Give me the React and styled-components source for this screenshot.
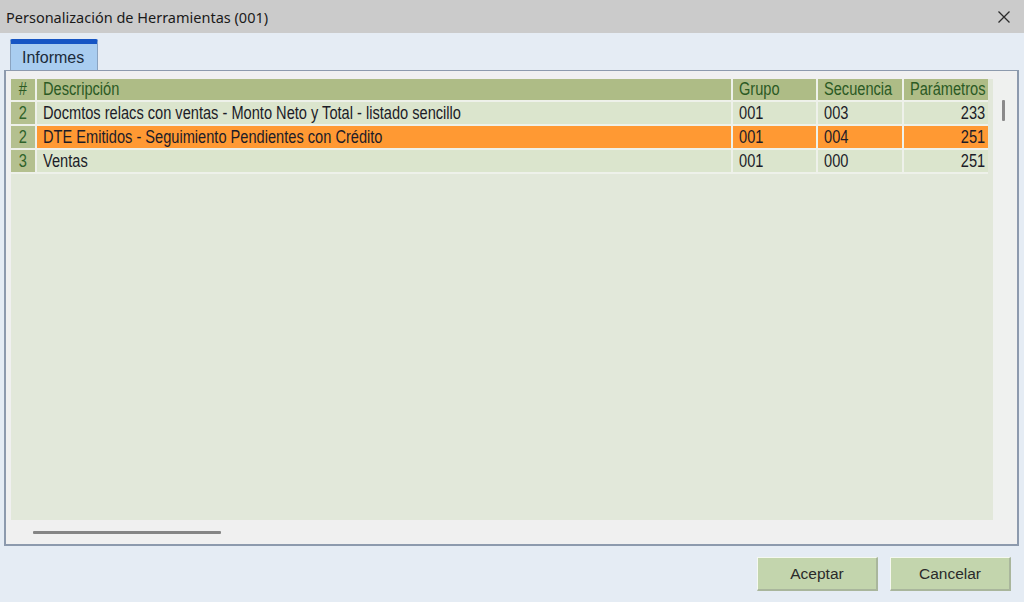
import styled, { createGlobalStyle } from "styled-components";

const GlobalStyle = createGlobalStyle`
  html, body {
    margin: 0;
    padding: 0;
    background: #e5ecf4;
  }
  * {
    box-sizing: border-box;
  }
`;

const rows = [
  { n: "2", desc: "Docmtos relacs con ventas - Monto Neto y Total - listado sencillo", grupo: "001", sec: "003", par: "233" },
  { n: "2", desc: "DTE Emitidos - Seguimiento Pendientes con Crédito", grupo: "001", sec: "004", par: "251", selected: true },
  { n: "3", desc: "Ventas", grupo: "001", sec: "000", par: "251" },
];

function App() {
  return (
    <Window>
      <GlobalStyle />
      <TitleBar>
        <Title>Personalización de Herramientas (001)</Title>
        <CloseBtn aria-label="Cerrar">
          <svg width="14" height="14" viewBox="0 0 14 14">
            <path d="M1.5 1.5 L12.5 12.5 M12.5 1.5 L1.5 12.5" stroke="#2b2b2b" strokeWidth="1.3" fill="none" />
          </svg>
        </CloseBtn>
      </TitleBar>

      <Body>
        <TabStrip>
          <Tab>Informes</Tab>
        </TabStrip>

        <Panel>
          <GridRow>
            <GridArea>
              <Table>
                <HeadCell $align="center"><Narrow $align="center">#</Narrow></HeadCell>
                <HeadCell><Narrow>Descripción</Narrow></HeadCell>
                <HeadCell><Narrow>Grupo</Narrow></HeadCell>
                <HeadCell><Narrow>Secuencia</Narrow></HeadCell>
                <HeadCell $align="right"><Narrow $align="right">Parámetros</Narrow></HeadCell>
                {rows.map((r, i) => (
                  <Row key={i}>
                    <NumCell><Narrow $align="center">{r.n}</Narrow></NumCell>
                    <Cell $sel={r.selected}><Narrow>{r.desc}</Narrow></Cell>
                    <Cell $sel={r.selected}><Narrow>{r.grupo}</Narrow></Cell>
                    <Cell $sel={r.selected}><Narrow>{r.sec}</Narrow></Cell>
                    <Cell $sel={r.selected} $align="right"><Narrow $align="right">{r.par}</Narrow></Cell>
                  </Row>
                ))}
              </Table>
            </GridArea>
            <VScroll>
              <VThumb />
            </VScroll>
          </GridRow>
          <HScroll>
            <HThumb />
          </HScroll>
        </Panel>

        <Footer>
          <Button>Aceptar</Button>
          <Button>Cancelar</Button>
        </Footer>
      </Body>
    </Window>
  );
}

const justify = (a) => (a === "center" ? "center" : a === "right" ? "flex-end" : "flex-start");

const Window = styled.div`
  width: 1024px;
  height: 602px;
  display: flex;
  flex-direction: column;
  background: #e5ecf4;
  overflow: hidden;
`;

const TitleBar = styled.div`
  height: 33px;
  flex-shrink: 0;
  display: flex;
  align-items: center;
  justify-content: space-between;
  padding: 0 12px 0 6px;
  background: #cbcbcb;
`;

const Title = styled.div`
  font-family: "Segoe UI", "Noto Sans", "Liberation Sans", sans-serif;
  font-size: 14.5px;
  color: #1a1a1a;
`;

const CloseBtn = styled.div`
  display: flex;
  align-items: center;
  justify-content: center;
  width: 16px;
  height: 16px;
`;

const Body = styled.div`
  flex: 1;
  display: flex;
  flex-direction: column;
  padding: 6px 5px 0 4px;
`;

const TabStrip = styled.div`
  display: flex;
  padding-left: 6px;
  height: 31px;
`;

const Tab = styled.div`
  width: 88px;
  height: 31px;
  display: flex;
  align-items: center;
  padding-left: 11px;
  padding-top: 2px;
  background: #a9cdf0;
  border-top: 5px solid #1655c4;
  border-left: 1px solid #8aa3c0;
  border-right: 1px solid #8aa3c0;
  border-radius: 2px 2px 0 0;
  font-family: "Liberation Sans", Arial, sans-serif;
  font-size: 16px;
  color: #1b2a3a;
`;

const Panel = styled.div`
  height: 476px;
  display: flex;
  flex-direction: column;
  background: #f0f0f0;
  border: 2px solid #8d9aad;
  border-top-width: 1px;
  padding: 8px 1px 0 5px;
`;

const GridRow = styled.div`
  display: flex;
  height: 441px;
`;

const GridArea = styled.div`
  width: 982px;
  height: 100%;
  background: #e2e8da;
`;

const Table = styled.div`
  display: grid;
  grid-template-columns: 24px 694px 83px 84px 84px;
  grid-auto-rows: 22px;
  grid-template-rows: 21px;
  gap: 2px;
  padding-bottom: 2px;
  width: 977px;
  background: #eef1ea;
  font-family: "Liberation Sans", Arial, sans-serif;
  font-size: 17.5px;
`;

const Row = styled.div`
  display: contents;
`;

/* no narrow face installed: squeeze Arial-metric text to Arial Narrow width */
const Narrow = styled.span`
  display: inline-block;
  white-space: nowrap;
  transform: scaleX(0.835);
  transform-origin: ${(p) => (p.$align === "center" ? "center" : p.$align === "right" ? "right" : "left")} center;
`;

const HeadCell = styled.div`
  display: flex;
  align-items: center;
  justify-content: ${(p) => justify(p.$align)};
  padding: 0 ${(p) => (p.$align === "right" ? "3px" : "0")} 0 ${(p) => (p.$align ? "0" : "6px")};
  background: #aebc86;
  color: #2b5a24;
  overflow: hidden;
`;

const NumCell = styled.div`
  display: flex;
  align-items: center;
  justify-content: center;
  background: #b4c08f;
  color: #2f632a;
  overflow: hidden;
`;

const Cell = styled.div`
  display: flex;
  align-items: center;
  justify-content: ${(p) => justify(p.$align)};
  padding: 0 ${(p) => (p.$align === "right" ? "3px" : "0")} 0 ${(p) => (p.$align ? "0" : "6px")};
  background: ${(p) => (p.$sel ? "#ff9933" : "#dbe5cd")};
  color: #1c1c28;
  overflow: hidden;
`;

const VScroll = styled.div`
  flex: 1;
  position: relative;
  background: #eff1ef;
`;

const VThumb = styled.div`
  position: absolute;
  left: 9px;
  top: 21px;
  width: 3px;
  height: 21px;
  border-radius: 1px;
  background: #8a8a8a;
`;

const HScroll = styled.div`
  height: 24px;
  display: flex;
  align-items: center;
  padding-left: 22px;
`;

const HThumb = styled.div`
  width: 188px;
  height: 3px;
  border-radius: 1px;
  background: #858585;
`;

const Footer = styled.div`
  display: flex;
  justify-content: flex-end;
  gap: 12px;
  padding: 11px 8px 0 0;
`;

const Button = styled.div`
  width: 121px;
  height: 34px;
  display: flex;
  align-items: center;
  justify-content: center;
  background: #c3d5ad;
  border-top: 1px solid #f5f8f1;
  border-left: 1px solid #f5f8f1;
  border-right: 2px solid #a9b69c;
  border-bottom: 2px solid #a9b69c;
  font-family: "Liberation Sans", Arial, sans-serif;
  font-size: 15.5px;
  color: #2a2a2a;
`;

export default App;
